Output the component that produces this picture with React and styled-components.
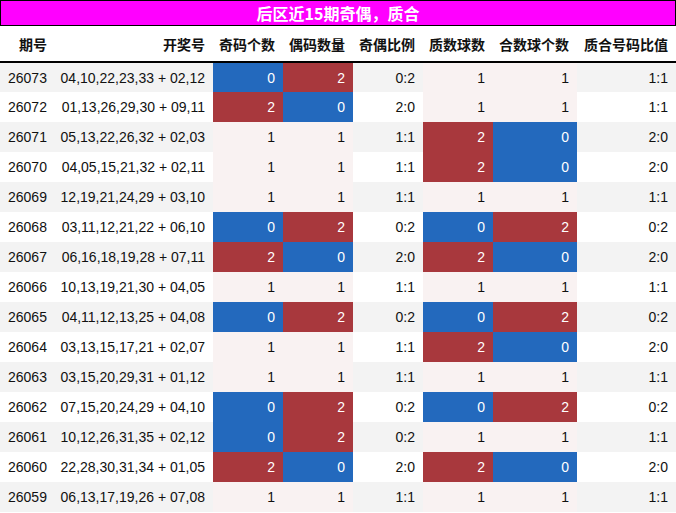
import React from 'react';
import styled, { createGlobalStyle } from 'styled-components';

const GlobalStyle = createGlobalStyle`
  html, body {
    margin: 0;
    padding: 0;
    background: #fff;
  }
  body {
    font-family: "Liberation Sans", "Noto Sans CJK SC", sans-serif;
    color: #111;
  }
`;

const BLUE = '#2369bd';
const RED = '#a8383d';
const PINK = '#f9f2f2';

const Wrap = styled.div`
  width: 676px;
`;

const Title = styled.div`
  height: 24px;
  border: 1px solid #000;
  background: #ff00ff;
  color: #fff;
  font-family: "Noto Sans CJK SC", sans-serif;
  font-weight: bold;
  font-size: 16px;
  display: flex;
  align-items: center;
  justify-content: center;
  line-height: 1;
`;

const Table = styled.table`
  width: 676px;
  border-collapse: collapse;
  table-layout: fixed;
  font-size: 14px;
`;

const Th = styled.th`
  height: 36px;
  padding: 0 8px 0 0;
  box-sizing: border-box;
  text-align: right;
  font-family: "Noto Sans CJK SC", sans-serif;
  font-weight: bold;
  font-size: 14px;
  border-bottom: 2px solid #000;
  white-space: nowrap;
  &:first-child {
    padding-left: 19px;
    text-align: left;
  }
`;

const Row = styled.tr`
  background: ${({ $stripe }) => ($stripe ? '#f3f3f3' : '#fff')};
`;

const Td = styled.td`
  height: 30px;
  padding: 0 8px 0 0;
  box-sizing: border-box;
  text-align: right;
  white-space: nowrap;
  background: ${({ $tone }) => $tone === 'b' ? BLUE : $tone === 'r' ? RED : $tone === 'p' ? PINK : 'transparent'};
  color: ${({ $tone }) => ($tone === 'b' || $tone === 'r' ? '#fff' : '#111')};
  &:first-child {
    padding-left: 8px;
    text-align: left;
  }
`;

const rows = [
  ['26073', '04,10,22,23,33 + 02,12', 0, 2, '0:2', 1, 1, '1:1'],
  ['26072', '01,13,26,29,30 + 09,11', 2, 0, '2:0', 1, 1, '1:1'],
  ['26071', '05,13,22,26,32 + 02,03', 1, 1, '1:1', 2, 0, '2:0'],
  ['26070', '04,05,15,21,32 + 02,11', 1, 1, '1:1', 2, 0, '2:0'],
  ['26069', '12,19,21,24,29 + 03,10', 1, 1, '1:1', 1, 1, '1:1'],
  ['26068', '03,11,12,21,22 + 06,10', 0, 2, '0:2', 0, 2, '0:2'],
  ['26067', '06,16,18,19,28 + 07,11', 2, 0, '2:0', 2, 0, '2:0'],
  ['26066', '10,13,19,21,30 + 04,05', 1, 1, '1:1', 1, 1, '1:1'],
  ['26065', '04,11,12,13,25 + 04,08', 0, 2, '0:2', 0, 2, '0:2'],
  ['26064', '03,13,15,17,21 + 02,07', 1, 1, '1:1', 2, 0, '2:0'],
  ['26063', '03,15,20,29,31 + 01,12', 1, 1, '1:1', 1, 1, '1:1'],
  ['26062', '07,15,20,24,29 + 04,10', 0, 2, '0:2', 0, 2, '0:2'],
  ['26061', '10,12,26,31,35 + 02,12', 0, 2, '0:2', 1, 1, '1:1'],
  ['26060', '22,28,30,31,34 + 01,05', 2, 0, '2:0', 2, 0, '2:0'],
  ['26059', '06,13,17,19,26 + 07,08', 1, 1, '1:1', 1, 1, '1:1'],
];

const tone = (v) => (v === 2 ? 'r' : v === 0 ? 'b' : 'p');

export default function App() {
  return (
    <Wrap>
      <GlobalStyle />
      <Title>后区近15期奇偶，质合</Title>
      <Table>
        <colgroup>
          <col style={{ width: 55 }} />
          <col style={{ width: 158 }} />
          <col style={{ width: 70 }} />
          <col style={{ width: 70 }} />
          <col style={{ width: 70 }} />
          <col style={{ width: 70 }} />
          <col style={{ width: 84 }} />
          <col style={{ width: 99 }} />
        </colgroup>
        <thead>
          <tr>
            <Th>期号</Th>
            <Th>开奖号</Th>
            <Th>奇码个数</Th>
            <Th>偶码数量</Th>
            <Th>奇偶比例</Th>
            <Th>质数球数</Th>
            <Th>合数球个数</Th>
            <Th>质合号码比值</Th>
          </tr>
        </thead>
        <tbody>
          {rows.map((r, i) => (
            <Row key={r[0]} $stripe={i % 2 === 0}>
              <Td>{r[0]}</Td>
              <Td>{r[1]}</Td>
              <Td $tone={tone(r[2])}>{r[2]}</Td>
              <Td $tone={tone(r[3])}>{r[3]}</Td>
              <Td>{r[4]}</Td>
              <Td $tone={tone(r[5])}>{r[5]}</Td>
              <Td $tone={tone(r[6])}>{r[6]}</Td>
              <Td>{r[7]}</Td>
            </Row>
          ))}
        </tbody>
      </Table>
    </Wrap>
  );
}
